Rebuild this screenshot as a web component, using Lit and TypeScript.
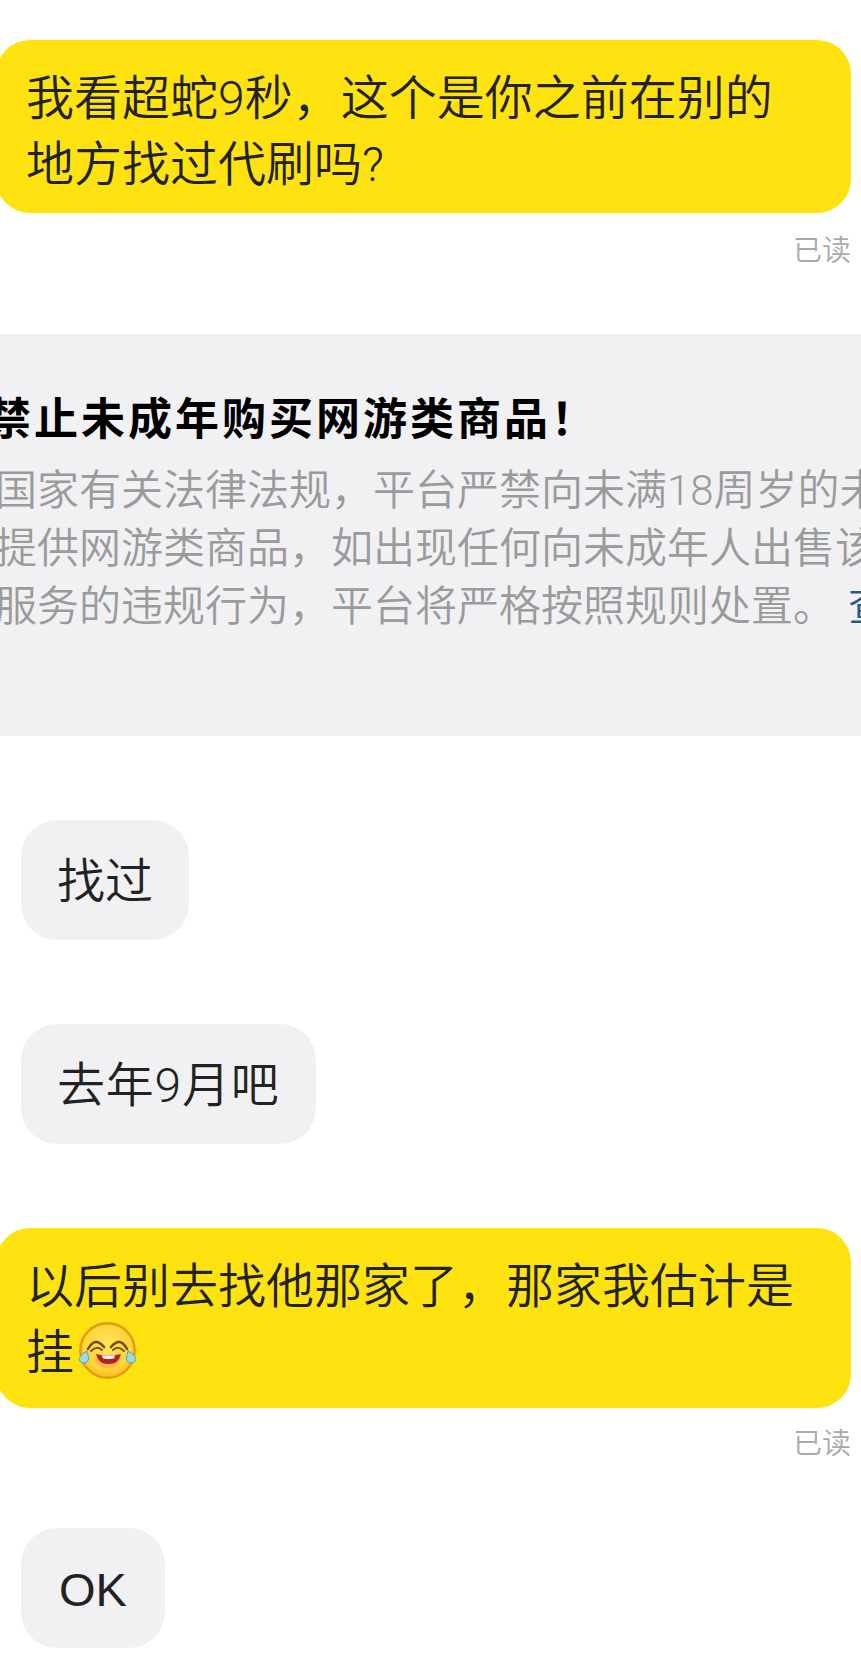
import { LitElement, html, css, svg } from 'lit';
import { customElement } from 'lit/decorators.js';

const laughEmoji = svg`<svg class="emoji" viewBox="0 0 57 57" aria-hidden="true">
    <defs>
      <radialGradient id="face" cx="50%" cy="42%" r="60%">
        <stop offset="0%" stop-color="#ffe35f" />
        <stop offset="70%" stop-color="#ffd53a" />
        <stop offset="100%" stop-color="#f8b722" />
      </radialGradient>
    </defs>
    <circle cx="28.5" cy="28.5" r="27.2" fill="url(#face)" stroke="#e29a10" stroke-width="2.400" />
    <path d="M9 27q7-13 16-2" fill="none" stroke="#7d4a10" stroke-width="2.600" stroke-linecap="round" />
    <path d="M32 25q9-11 16 2" fill="none" stroke="#7d4a10" stroke-width="2.600" stroke-linecap="round" />
    <path d="M12 29q6-6 11-1" fill="none" stroke="#7d4a10" stroke-width="1.800" stroke-linecap="round" />
    <path d="M34 28q5-5 11 1" fill="none" stroke="#7d4a10" stroke-width="1.800" stroke-linecap="round" />
    <path d="M16 36q12 5 25 0q-2 10-12.500 10T16 36z" fill="#f9a04a" opacity="0.6" />
    <path d="M17 32q11.500 3 25 0q-2 10-12.500 10T17 32z" fill="#b5202a" />
    <path d="M23 33.200q6.500 .8 13 0l-1 3.400q-5.500 .8-11 0z" fill="#fff" />
    <path d="M8 29q1.500 5 1.500 7.500a4.700 4.700 0 0 1-9.300 .8q.3-4 7.800-8.300z" fill="#9adbe6" stroke="#4fa5b4" stroke-width="1" />
    <path d="M49 29q-1.500 5-1.500 7.500a4.700 4.700 0 0 0 9.300 .8q-.3-4-7.800-8.300z" fill="#9adbe6" stroke="#4fa5b4" stroke-width="1" />
  </svg>`;

@customElement('app-root')
export class AppRoot extends LitElement {
  static styles = css`
    :host {
      display: block;
      height: 1667px;
      overflow: hidden;
      background: #fff;
      font-family: Roboto, 'Noto Sans CJK SC', sans-serif;
      font-weight: 350;
      color: #222;
    }
    .page {
      display: flex;
      flex-direction: column;
      padding-top: 40px;
    }
    .out {
      display: flex;
      flex-direction: column;
      align-items: flex-end;
      padding-right: 10px;
    }
    .out .bubble {
      box-sizing: border-box;
      width: 855px;
      margin-left: -4px;
      padding: 26px 40px 15px 30px;
      background: #ffe310;
      border-radius: 34px;
      font-size: 48px;
      line-height: 66px;
    }
    .out .bubble.tall {
      height: 180px;
    }
    .read {
      margin-top: 23px;
      font-size: 29px;
      line-height: 30px;
      color: #aaa;
    }
    .read.near {
      margin-top: 21px;
    }
    .emoji {
      width: 57px;
      height: 57px;
      margin-left: 5px;
      vertical-align: -10px;
    }
    .notice {
      box-sizing: border-box;
      height: 402px;
      margin-top: 68px;
      padding-top: 58px;
      background: #f1f1f3;
      overflow: hidden;
      white-space: nowrap;
    }
    .notice h2 {
      margin: 0 0 0 -13px;
      font-size: 44px;
      line-height: 56px;
      letter-spacing: 3px;
      font-weight: 700;
      color: #000;
    }
    .notice p {
      margin: 14px 0 0 -5px;
      font-size: 42px;
      line-height: 58px;
      color: #9a9b9d;
    }
    .notice a {
      color: #1f5c8b;
      margin-left: 13px;
    }
    .notice span {
      display: block;
    }
    .in {
      align-self: flex-start;
      margin-left: 21px;
      padding: 0 36px;
      height: 120px;
      line-height: 124px;
      background: #f1f1f3;
      border-radius: 36px;
      font-size: 48px;
    }
    .in.spaced {
      letter-spacing: 0.8px;
    }
    .in.latin {
      padding: 0 38px;
      font-family: 'Liberation Sans', sans-serif;
      font-size: 47px;
      font-weight: 400;
    }
    .first,
    .second {
      margin-top: 84px;
    }
    .out-gap {
      margin-top: 84px;
    }
    .after-read {
      margin-top: 69px;
    }
  `;

  render() {
    return html`
      <div class="page">
        <div class="out">
          <div class="bubble">我看超蛇9秒，这个是你之前在别的地方找过代刷吗?</div>
          <div class="read">已读</div>
        </div>

        <div class="notice">
          <h2>禁止未成年购买网游类商品！</h2>
          <p>
            <span>国家有关法律法规，平台严禁向未满18周岁的未</span>
            <span>提供网游类商品，如出现任何向未成年人出售该</span>
            <span>服务的违规行为，平台将严格按照规则处置。<a>查</a></span>
          </p>
        </div>

        <div class="in first">找过</div>
        <div class="in second spaced">去年9月吧</div>

        <div class="out out-gap">
          <div class="bubble tall">以后别去找他那家了，那家我估计是挂${laughEmoji}</div>
          <div class="read near">已读</div>
        </div>

        <div class="in latin after-read">OK</div>
      </div>
    `;
  }
}
